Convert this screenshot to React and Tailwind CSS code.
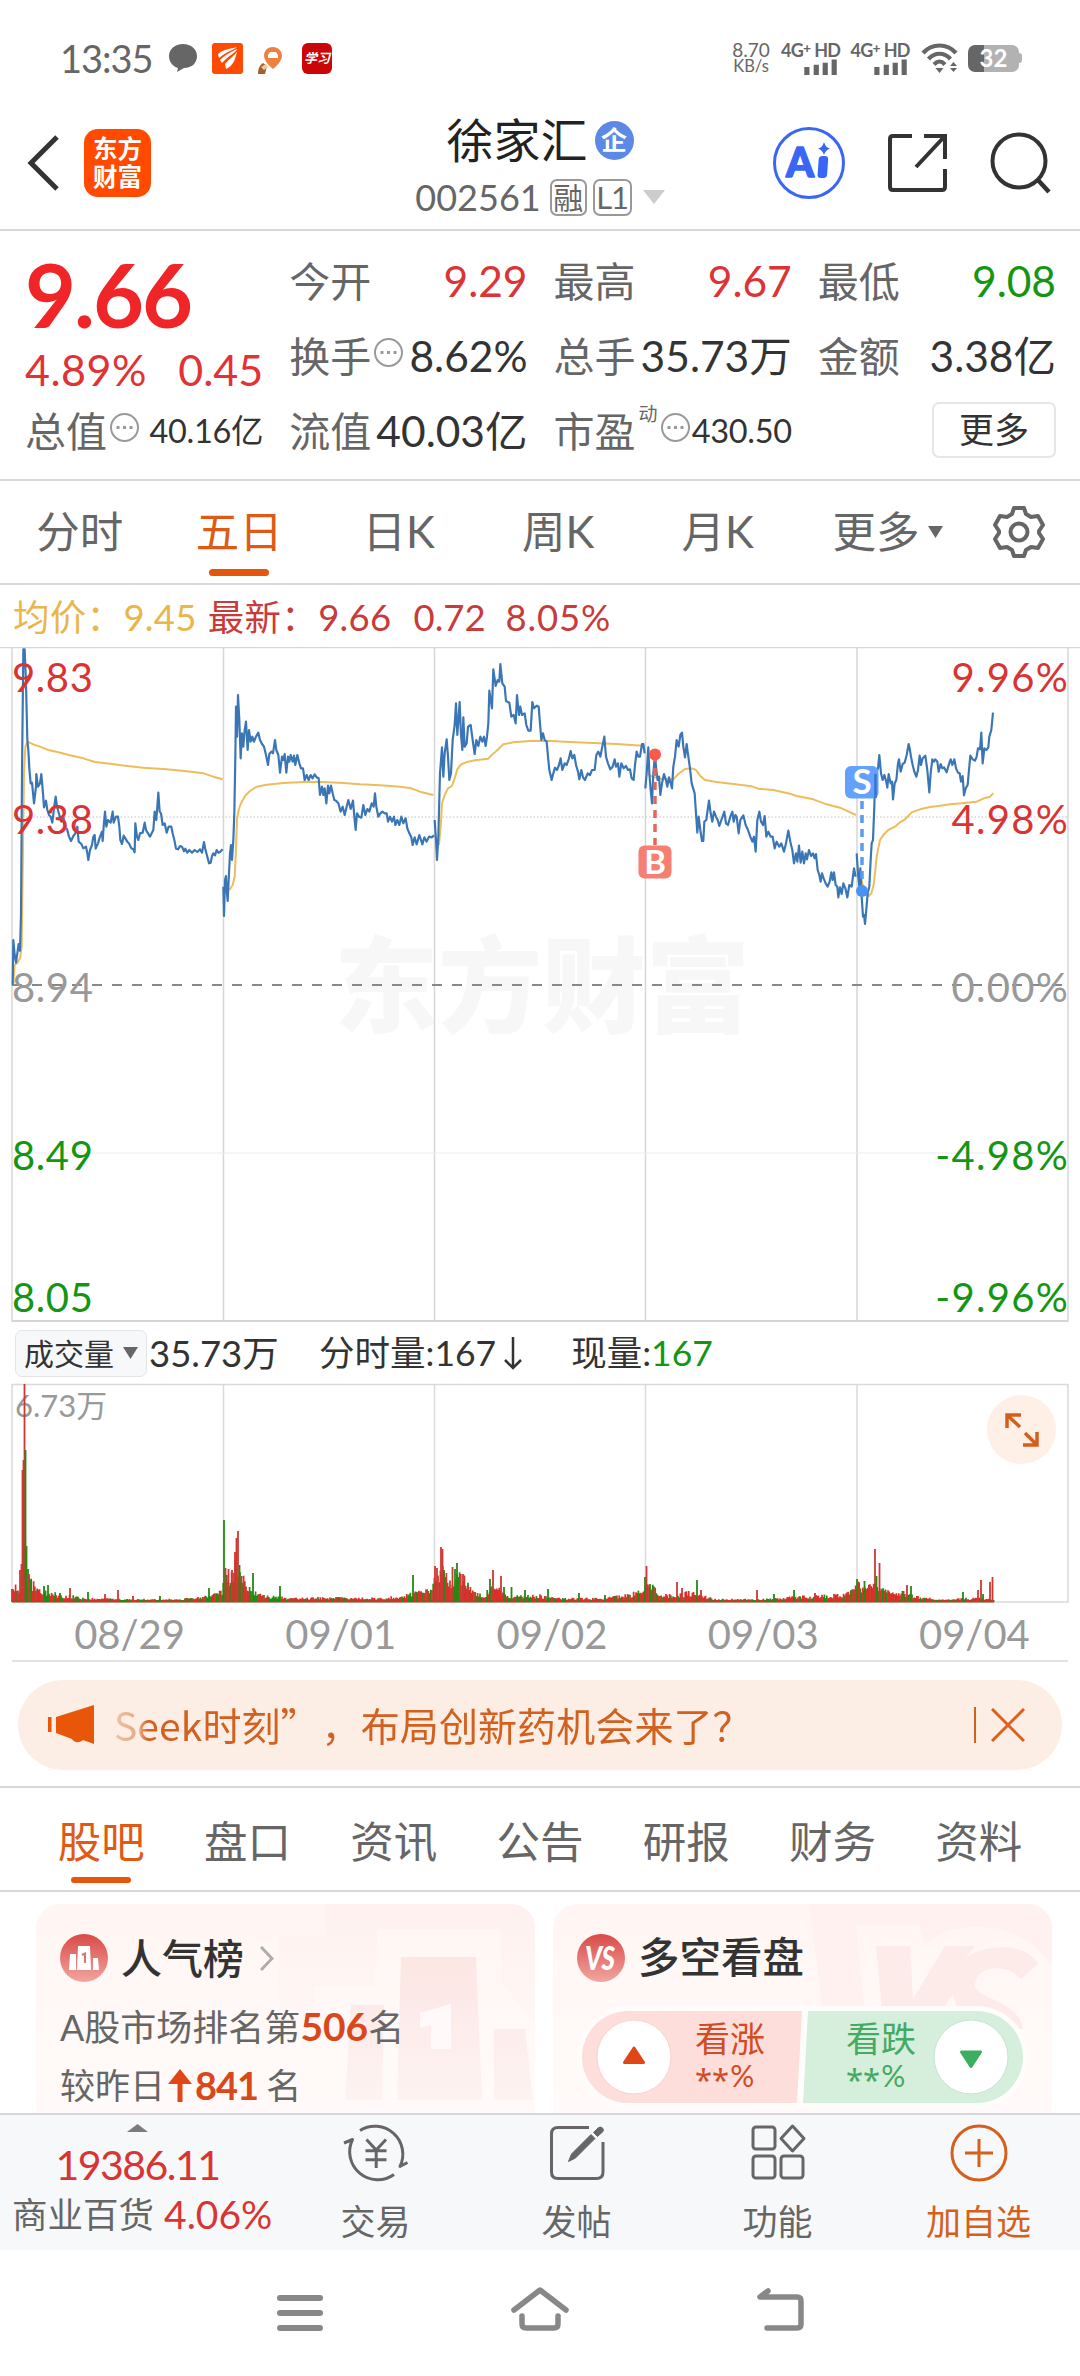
// src/pages/StockDetailPage.jsx
import React from "react";

const TABS = ["分时", "五日", "日K", "周K", "月K"];
const SECTIONS = ["股吧", "盘口", "资讯", "公告", "研报", "财务", "资料"];
const DATES = ["08/29", "09/01", "09/02", "09/03", "09/04"];

// 五日分时走势：坐标为 1/3 像素，x 为每日起点偏移
const DAYS = [
  {
    offset: 0,
    price:
      "38,1035 40,900 44,945 48,968 52,940 56,912 60,932 63,820 66,400 70,28 74,28 78,130 80,215 82,300 85,330 88,385 92,430 96,428 102,490 108,440 109,402 114,440 120,430 124,402 129,460 132,502 138,482 142,510 147,525 152,530 157,548 162,505 167,470 171,500 178,525 184,545 190,530 196,560 202,570 207,590 213,603 220,588 226,580 232,560 236,605 244,612 250,625 258,620 262,640 265,660 270,630 276,615 280,590 284,585 287,626 294,610 300,590 306,575 308,603 311,560 315,515 319,560 324,540 332,548 338,515 341,548 348,530 354,530 358,560 361,600 366,612 371,587 376,595 382,605 388,612 394,625 400,628 404,637 406,550 411,590 415,600 420,580 428,578 434,548 438,570 444,580 450,590 455,580 460,570 464,515 469,540 475,458 479,515 483,520 488,555 494,550 500,578 506,560 514,560 518,580 523,600 528,626 534,628 540,618 546,620 552,634 556,626 562,638 568,630 576,638 584,630 592,636 600,628 606,638 612,606 616,628 622,650 627,670 632,668 636,648 640,640 645,646 650,630 655,638 660,636 668,628",
    avg: "40,1035 44,975 52,968 60,955 65,920 68,700 72,400 76,320 82,305 100,313 120,320 145,330 175,337 210,346 250,355 285,366 330,371 375,377 430,383 500,388 560,394 610,400 640,410 668,418",
  },
  {
    offset: 0,
    price:
      "670,740 672,828 675,720 678,708 680,750 683,783 686,720 690,640 693,615 696,660 700,600 703,520 706,350 708,200 711,290 714,165 718,240 722,355 726,280 730,320 734,270 738,245 743,330 747,270 752,305 757,290 762,305 768,290 775,278 780,300 786,312 792,320 798,345 804,375 808,342 814,335 819,340 825,300 829,330 835,345 840,398 846,350 850,360 854,342 859,398 864,350 868,365 872,345 878,365 882,347 886,375 892,345 898,370 903,385 909,385 914,420 920,405 926,420 932,405 938,415 944,403 950,412 956,415 960,465 966,440 970,465 974,445 979,490 984,437 988,460 993,437 998,460 1003,480 1008,482 1015,490 1022,515 1028,500 1034,525 1040,500 1045,480 1052,507 1059,482 1063,530 1067,570 1071,520 1077,530 1084,533 1090,495 1096,525 1102,507 1108,515 1115,490 1121,500 1125,460 1129,500 1135,530 1141,520 1147,515 1154,520 1160,520 1164,545 1170,530 1176,545 1182,530 1186,555 1192,540 1198,555 1204,530 1210,550 1217,535 1222,565 1228,580 1234,592 1238,615 1244,592 1250,613 1258,585 1263,600 1267,613 1273,592 1280,605 1287,590 1295,592 1302,586",
    avg: "688,750 698,735 704,710 707,650 711,540 716,510 722,492 735,468 750,453 770,440 800,434 850,429 910,426 970,426 1030,429 1080,433 1140,436 1200,440 1230,444 1260,455 1300,465",
  },
  {
    offset: 1260,
    price:
      "44,540 48,600 51,660 55,590 60,400 66,322 70,410 74,340 80,298 84,350 88,420 93,400 98,300 104,255 108,190 112,285 116,230 119,186 123,285 127,330 130,232 134,320 140,310 144,260 152,255 158,300 164,342 169,300 175,318 181,290 187,305 192,290 197,318 201,290 205,250 208,152 212,180 216,205 220,88 227,138 233,120 238,125 241,72 247,130 254,140 258,183 268,188 274,230 281,225 287,250 291,165 297,225 301,200 306,225 314,220 319,255 325,272 332,272 337,186 342,205 350,197 356,200 360,250 364,300 369,280 374,300 380,305 384,350 388,390 395,420 400,400 405,383 411,390 417,375 422,355 427,390 434,370 440,375 447,355 452,333 457,355 463,345 468,375 474,395 478,418 484,390 489,412 495,420 503,400 510,405 516,390 524,390 529,345 535,335 541,350 546,325 553,290 558,350 564,370 571,388 578,380 584,358 588,380 594,370 598,410 604,370 611,385 618,378 624,390 630,388 635,415 641,420 645,375 650,335 655,350 660,350 666,312 670,312 674,340",
    avg: "57,615 62,560 66,490 74,465 84,445 96,438 104,415 112,388 122,374 140,366 165,361 205,356 215,345 230,332 250,313 280,307 330,303 380,302 450,306 520,309 590,312 668,317",
  },
  {
    offset: 1260,
    price:
      "676,445 680,400 685,322 688,400 692,450 696,490 700,400 705,345 709,390 713,420 717,410 721,465 726,430 732,402 738,420 742,440 747,412 752,430 756,445 760,380 765,350 770,300 776,320 781,285 786,278 790,320 795,352 800,312 805,350 810,385 815,430 824,460 828,520 832,578 836,530 841,570 846,603 850,603 853,545 859,540 863,510 867,482 872,520 877,545 882,515 888,530 893,540 898,558 904,540 913,515 918,550 924,555 931,530 937,515 941,545 946,525 950,530 956,580 961,540 970,526 977,555 984,570 991,590 997,605 1002,590 1007,635 1012,540 1018,515 1023,545 1029,555 1034,528 1039,590 1045,575 1052,590 1058,590 1064,625 1070,605 1078,620 1084,610 1092,635 1098,610 1105,572 1111,605 1117,630 1122,670 1128,640 1132,665 1137,617 1142,668 1147,635 1152,670 1157,640 1161,658 1167,630 1173,648 1179,640 1184,655 1188,642 1193,690 1198,705 1202,725 1206,700 1211,715 1217,730 1223,740 1229,725 1234,697 1238,720 1242,697 1247,735 1252,740 1255,772 1260,742 1265,762 1270,730 1276,745 1282,772 1288,735 1295,740 1302,685 1307,710",
    avg: "684,400 692,408 705,412 730,418 760,418 775,402 795,387 815,385 828,390 840,407 855,420 890,426 940,432 995,439 1015,446 1060,450 1110,461 1130,468 1180,478 1220,493 1260,503 1308,525",
  },
  {
    offset: 2340,
    price:
      "230,640 234,700 238,740 241,685 245,770 249,830 252,825 255,852 258,820 263,760 268,740 272,660 275,610 279,600 283,500 285,420 288,400 294,385 298,345 303,400 308,420 313,405 318,422 322,443 326,402 332,430 336,425 339,478 344,430 349,420 354,370 357,358 362,395 368,372 374,368 380,345 386,312 389,325 393,350 398,375 403,395 409,410 414,390 419,347 423,375 428,355 436,347 442,390 448,457 452,400 457,358 462,365 466,358 472,365 476,395 482,372 487,385 492,382 500,397 506,375 512,358 517,375 523,358 528,385 534,398 539,400 543,425 548,408 552,466 557,445 563,435 567,390 571,347 578,358 585,362 590,350 594,325 600,328 604,278 608,370 613,325 619,330 625,322 628,290 634,270 639,218",
    avg: "238,690 243,710 249,740 256,760 266,768 274,760 281,735 286,690 290,650 296,620 300,600 310,585 325,570 345,560 360,547 375,538 395,517 420,508 450,501 480,497 510,493 545,490 590,485 612,475 630,470 640,460",
  },
];

// [x, 高度] 成交量基线包络
const ENVELOPE = [
  [12, 21], [19, 16], [30, 24], [40, 12], [60, 8], [90, 4], [130, 3], [180, 3], [205, 6], [215, 9],
  [222, 12], [224, 30], [230, 28], [236, 40], [242, 28], [250, 15], [260, 8], [290, 4], [330, 5],
  [370, 4], [400, 6], [430, 13], [435, 32], [442, 36], [452, 22], [462, 32], [472, 12], [485, 6],
  [490, 18], [500, 13], [510, 6], [540, 7], [560, 4], [600, 4], [630, 8], [643, 14], [646, 26],
  [652, 18], [660, 9], [675, 7], [690, 11], [700, 8], [715, 3], [760, 3], [800, 6], [845, 8],
  [855, 14], [858, 20], [866, 15], [875, 20], [882, 15], [890, 11], [905, 10], [912, 7], [925, 5],
  [945, 2], [965, 4], [985, 4], [994, 2],
];
const SPIKES = [
  [20, 32, 1], [21.5, 38, 1], [22.5, 132, 1], [23.5, 142, 1], [24.5, 218, 1], [25.5, 152, 0],
  [26.5, 56, 0], [28, 33, 0], [29, 28, 1], [44, 16, 0], [48, 17, 0], [60, 9, 0], [70, 14, 1],
  [88, 10, 0], [105, 8, 1], [118, 12, 1], [133, 6, 1], [160, 6, 0], [209, 14, 0], [224, 82, 0],
  [225.5, 34, 1], [228.5, 33, 1], [232, 32, 1], [235, 50, 1], [236.5, 64, 1], [238, 71, 1],
  [239.5, 37, 0], [241.5, 26, 1], [253, 29, 0], [280, 16, 0], [413, 27, 0], [435, 36, 1],
  [437, 34, 1], [441, 55, 1], [442.5, 53, 1], [444, 32, 0], [446, 25, 1], [452.5, 35, 1],
  [455, 33, 0], [457, 39, 0], [460, 25, 1], [463, 28, 1], [468, 17, 1], [490, 23, 0], [493, 32, 1],
  [501, 26, 1], [504, 15, 0], [511.5, 15, 0], [525, 12, 0], [548, 13, 0], [579, 9, 0], [605, 7, 0],
  [645, 25, 0], [646.5, 36, 1], [650, 18, 0], [677, 20, 1], [682, 14, 1], [697, 22, 0],
  [701, 12, 1], [757, 12, 1], [774, 8, 0], [794, 12, 0], [815, 9, 1], [857, 23, 0], [864.5, 21, 0],
  [875, 53, 1], [876.5, 26, 0], [879.5, 39, 1], [907, 17, 1], [911, 16, 0], [963, 10, 0],
  [978, 12, 1], [981, 22, 1], [983, 8, 0], [990, 20, 1], [992.5, 25, 1],
];

function envelopeAt(x) {
  for (let i = 1; i < ENVELOPE.length; i++) {
    const [x0, h0] = ENVELOPE[i - 1];
    const [x1, h1] = ENVELOPE[i];
    if (x <= x1) return h0 + ((h1 - h0) * (x - x0)) / (x1 - x0);
  }
  return 2;
}

function buildVolume() {
  let seed = 20250904;
  const rand = () => {
    seed = (seed * 1103515245 + 12345) % 2147483648;
    return seed / 2147483648;
  };
  let red = "";
  let green = "";
  for (let x = 12; x < 994; x += 1.2) {
    const h = Math.max(2, envelopeAt(x) * (0.5 + 0.6 * rand()));
    const seg = `M${x.toFixed(1)} 218v-${h.toFixed(1)}`;
    if (rand() > 0.4) red += seg;
    else green += seg;
  }
  return { red, green };
}
const VOLUME = buildVolume();

export default function App() {
  return (
    <div
      lang="zh-CN"
      className="w-[1080px] h-[2376px] bg-white text-[#666] flex flex-col overflow-hidden leading-none font-['Lato','Noto_Sans_CJK_SC',sans-serif] whitespace-nowrap"
    >
      <StatusBar />
      <Header />
      <Quote />
      <PeriodTabs />
      <PriceChart />
      <VolumeChart />
      <Banner />
      <SectionTabs />
      <Cards />
      <BottomBar />
      <SystemNav />
    </div>
  );
}

function StatusBar() {
  return (
    <div className="h-[88px] shrink-0 flex items-center pt-[28px] pl-[60px] pr-[58px] justify-between">
      <div className="flex items-center">
        <span className="text-[38px] w-[108px] tracking-[-1px]">13:35</span>
        <svg className="w-[30px] h-[30px]" viewBox="0 0 30 30">
          <path d="M15 1C7 1 1 6 1 13s5 11 9 12l-1 4 7-4c8 0 13-5 13-12S23 1 15 1Z" fill="#666" />
        </svg>
        <svg className="w-[31px] h-[31px] ml-[14px]" viewBox="0 0 31 31">
          <rect width="31" height="31" rx="3" fill="#ff4a05" />
          <path d="M6 11C12 6 18 6 25 4c-3 3-10 4-18 11ZM8 17C14 11 19 9 25 6c-1 4-8 6-15 14ZM14 26c8-4 9-10 11-17-3 4-8 7-12 12Z" fill="#fff" />
        </svg>
        <svg className="w-[30px] h-[31px] ml-[14px]" viewBox="0 0 30 31">
          <path d="M16 4c-6 0-9 4-9 9 0 6 9 13 9 13s9-7 9-13c0-5-4-9-9-9Z" fill="#f08040" />
          <path d="M11 12l2-3h6l2 3v3H11Z" fill="#fff" />
          <path d="M1 31c0-6 2-9 5-11l4 3-2 8Z" fill="#a4602c" />
          <path d="M4 24l5-3 2 3-4 3Z" fill="#f7c79c" />
        </svg>
        <div className="w-[30px] h-[31px] ml-[15px] rounded-[6px] bg-[#cc0608] text-white text-[13px] font-bold italic flex items-center justify-center">
          学习
        </div>
      </div>
      <div className="flex items-center">
        <div className="w-[44px] text-[19px] leading-[17px] text-center mr-[8px]">
          <div>8.70</div>
          <div className="text-[16.500px]">KB/s</div>
        </div>
        <Signal />
        <Signal />
        <svg className="w-[40px] h-[32px]" viewBox="0 0 40 32">
          <g fill="none" stroke="#666" strokeWidth="4.2">
            <path d="M3 11C12 1 27 1 36 11" />
            <path d="M8.500 17C15 10 24 10 30.500 17" />
            <path d="M14 22.500c4-4 7-4 11 0" />
          </g>
          <path d="M15.500 26h8L19.500 31ZM30 24l3.500-4 3.500 4ZM30 26h7l-3.500 4Z" fill="#666" />
        </svg>
        <div className="ml-[8px] w-[51px] h-[27px] rounded-[7px] bg-gradient-to-r from-[#666] from-32% to-[#b2b2b2] to-32% text-white font-bold text-[24px] flex items-center justify-center">
          32
        </div>
        <div className="w-[3px] h-[10px] bg-[#b2b2b2] rounded-r" />
      </div>
    </div>
  );
}

function Signal() {
  return (
    <div className="w-[69.500px] h-[34px] flex flex-col justify-between">
      <div className="text-[18px] font-bold tracking-[-0.7px]">
        4G<span className="text-[14px] align-[4px]">+</span> HD
      </div>
      <svg className="w-[36px] h-[17px] ml-[22px]" viewBox="0 0 36 17">
        <path d="M3 8.500V17M13 6V17M22.500 4V17M32 0.500V17" stroke="#666" strokeWidth="5.500" />
      </svg>
    </div>
  );
}

function Header() {
  return (
    <div className="h-[143px] shrink-0 border-b-2 border-[#d9d9d9] flex items-center">
      <div className="w-[390px] flex items-center pl-[27px] pb-[1px]">
        <svg className="w-[34px] h-[56px] mt-[9px]" viewBox="0 0 34 56" fill="none">
          <path d="M30 2 4 28l26 26" stroke="#333" strokeWidth="5" />
        </svg>
        <div className="ml-[23px] mt-[9px] w-[67px] h-[68px] rounded-[14px] bg-[#ff4a00] text-white text-[24.500px] leading-[28px] font-bold flex flex-col items-center justify-center">
          <span>东方</span>
          <span>财富</span>
        </div>
      </div>
      <div className="w-[300px] flex flex-col items-center pt-[15px]">
        <div className="flex items-center gap-[7px] text-[47px] text-[#222]">
          徐家汇
          <span className="size-[39px] rounded-full bg-[#5d89e6] text-white text-[26px] font-bold flex items-center justify-center">
            企
          </span>
        </div>
        <div className="flex items-center mt-[15px]">
          <span className="text-[36px] mr-[9px]">002561</span>
          <span className="w-[37px] h-[37px] rounded-[7px] border-2 border-[#999] text-[30px] flex items-center justify-center">融</span>
          <span className="ml-[6px] w-[39px] h-[37px] rounded-[7px] border-2 border-[#999] text-[31px] flex items-center justify-center tracking-[-1px]">L1</span>
          <svg className="w-[22px] h-[14px] ml-[11px]" viewBox="0 0 22 14">
            <path d="M0 0h22L11 14Z" fill="#ccc" />
          </svg>
        </div>
      </div>
      <div className="flex-1 flex items-center pl-[82px] pt-[8px]">
        <svg className="size-[74px]" viewBox="0 0 74 74">
          <circle cx="37" cy="37" r="34.500" fill="#fff" stroke="#3a66f6" strokeWidth="3" />
          <text x="14" y="51" fontSize="41" fontWeight="900" fill="#3a66f6" stroke="#3a66f6" strokeWidth="1.500" strokeLinejoin="round" textLength="28" lengthAdjust="spacingAndGlyphs">A</text>
          <rect x="46" y="30" width="9.500" height="22" rx="3.500" fill="#3a66f6" transform="skewX(-4) translate(3 0)" />
          <path d="M52 16q1.500 5.500 6 6.500-4.500 1.500-6 6.500-1.500-5-6-6.500 4.500-1 6-6.500Z" fill="#3a66f6" />
        </svg>
        <svg className="w-[60px] h-[60px] ml-[41px]" viewBox="0 0 60 60" fill="none" stroke="#333" strokeWidth="4">
          <path d="M25 3H6Q3 3 3 6V54q0 3 3 3H55q3 0 3-3V36" />
          <path d="M37 3H58V26M57 4 29 34" />
        </svg>
        <svg className="w-[62px] h-[62px] ml-[43px]" viewBox="0 0 62 62" fill="none" stroke="#333" strokeWidth="4">
          <circle cx="29" cy="29" r="26.500" />
          <path d="M48 48 59 60" strokeWidth="4.500" />
        </svg>
      </div>
    </div>
  );
}

function Dots() {
  return (
    <svg className="size-[31px] mt-[-8px] ml-[2px] shrink-0" viewBox="0 0 31 31">
      <circle cx="15.500" cy="15.500" r="13.500" fill="none" stroke="#999" strokeWidth="2" />
      <path d="M7.500 15.500h3M14 15.500h3M20.500 15.500h3" stroke="#999" strokeWidth="3" />
    </svg>
  );
}

function Cell({ label, value, dots, sup, color = "text-[#333]", small }) {
  return (
    <div className="flex items-center h-[75px]">
      <span className="text-[41px]">{label}</span>
      {sup && <span className="text-[19px] mb-[37px] ml-[3px]">{sup}</span>}
      {dots && <Dots />}
      <span className={`ml-auto ${small ? "text-[32.500px] tracking-[-0.3px]" : "text-[42.500px]"} ${color}`}>
        {value}
      </span>
    </div>
  );
}

function Quote() {
  return (
    <div className="h-[250px] shrink-0 border-b-2 border-[#d9d9d9] pl-[25px] pr-[24px] pt-[13px] grid grid-cols-4 grid-rows-[75px_75px_75px] gap-x-[26px]">
      <div className="row-span-2 text-[#e13236]">
        <div className="text-[88px] font-bold text-[#ef2528] tracking-[-2px] h-[88px] mt-[6px]">9.66</div>
        <div className="flex justify-between text-[43px] mt-[10px]">
          <span className="tracking-[0.5px]">4.89%</span>
          <span>0.45</span>
        </div>
      </div>
      <Cell label="今开" value="9.29" color="text-[#dc3436]" />
      <Cell label="最高" value="9.67" color="text-[#dc3436]" />
      <Cell label="最低" value="9.08" color="text-[#149614]" />
      <Cell label="换手" value="8.62%" dots />
      <Cell label="总手" value="35.73万" />
      <Cell label="金额" value="3.38亿" />
      <Cell label="总值" value="40.16亿" dots small />
      <Cell label="流值" value="40.03亿" />
      <Cell label="市盈" value="430.50" sup="动" dots small />
      <div className="self-center justify-self-end w-[124px] h-[56px] mb-[4px] rounded-[7px] border-2 border-[#e6e6e6] text-[#333] text-[35px] flex items-center justify-center">
        更多
      </div>
    </div>
  );
}

function PeriodTabs() {
  return (
    <div className="h-[104px] shrink-0 border-b-2 border-[#d9d9d9] flex items-center text-[43.500px]">
      {TABS.map((t) => (
        <div key={t} className={`w-[159.500px] h-full relative flex items-center justify-center ${t === "五日" ? "text-[#df5a14]" : ""}`}>
          {t}
          {t === "五日" && <span className="absolute bottom-[7px] w-[60px] h-[7px] rounded-full bg-[#e4560c]" />}
        </div>
      ))}
      <div className="w-[180px] flex items-center justify-center gap-[8px]">
        更多
        <svg className="w-[15px] h-[12px]" viewBox="0 0 15 12">
          <path d="M0 0h15L7.500 12Z" fill="#666" />
        </svg>
      </div>
      <svg className="size-[56px] ml-[13px]" viewBox="0 0 56 56" fill="none" stroke="#666" strokeWidth="4" strokeLinejoin="round">
        <path d="M23 4h10l2 6 5 3 7-1 5 9-4 6v2l4 6-5 9-7-1-5 3-2 6H23l-2-6-5-3-7 1-5-9 4-6v-2l-4-6 5-9 7 1 5-3Z" />
        <circle cx="28" cy="28" r="8.500" />
      </svg>
    </div>
  );
}

function PriceChart() {
  return (
    <div className="shrink-0">
      <div className="h-[62px] flex items-center text-[36.500px] pl-[13px] text-[#c93a3a] pt-[2px]">
        <span className="text-[#e9b64c] mr-[11px] tracking-[0.3px]">均价：9.45</span>
        <span className="tracking-[0.3px]">最新：9.66</span>
        <span className="ml-[22px]">0.72</span>
        <span className="ml-[20px] tracking-[0.8px]">8.05%</span>
      </div>
      <svg className="w-[1080px] h-[675px] block" viewBox="0 7 1080 675">
        <text x="334" y="385" fontSize="104" fontWeight="900" fill="#f7f7f7">东方财富</text>
        <g stroke="#d6d6d6" fill="none">
          <path d="M0 7.500H1080" strokeWidth="1.500" />
          <path d="M12 8V682M223.500 8V682M434.500 8V682M645.500 8V682M857 8V682M1068 8V682" strokeWidth="1.500" />
          <path d="M12 681H1068" strokeWidth="2" />
          <path d="M12 513H1068" stroke="#ececec" />
          <path d="M12 177H1068" strokeWidth="1.500" strokeDasharray="1.500 2" />
          <path d="M12 345H1068" stroke="#888" strokeWidth="2" strokeDasharray="10 10" />
        </g>
        {DAYS.map((d, i) => (
          <g key={i} transform={`scale(0.33333) translate(${d.offset} 0)`} fill="none" strokeLinejoin="round">
            <polyline points={d.avg} stroke="#edbd5c" strokeWidth="6" />
            <polyline points={d.price} stroke="#3a75b5" strokeWidth="6.500" />
          </g>
        ))}
        <path d="M655 114V205" stroke="#e2685e" strokeWidth="3.500" strokeDasharray="8 6" />
        <circle cx="655" cy="114.500" r="6" fill="#fa5a4b" />
        <rect x="638.500" y="205.500" width="33" height="33" rx="6" fill="#f77f71" />
        <text x="655" y="234" fontSize="33" fontWeight="bold" fill="#fff" textAnchor="middle">B</text>
        <path d="M862 161V250" stroke="#5a9bf0" strokeWidth="3.500" strokeDasharray="8 6" />
        <circle cx="862" cy="251" r="6" fill="#4a92f5" />
        <rect x="845" y="126" width="33.500" height="32.500" rx="6" fill="#64a1fb" />
        <path d="M875.500 134V158" stroke="#3274d8" strokeWidth="2.500" />
        <text x="862" y="154" fontSize="35" fontWeight="bold" fill="#fff" textAnchor="middle">S</text>
        <g fontSize="40" letterSpacing="0.600">
          <g fill="#d83434">
            <text x="12" y="52">9.83</text>
            <text x="12" y="194">9.38</text>
          </g>
          <text x="12" y="362" fill="#999">8.94</text>
          <g fill="#149614">
            <text x="12" y="530">8.49</text>
            <text x="12" y="672">8.05</text>
          </g>
          <g textAnchor="end" letterSpacing="1.300">
            <g fill="#d83434">
              <text x="1069" y="52">9.96%</text>
              <text x="1069" y="194">4.98%</text>
            </g>
            <text x="1069" y="362" fill="#999">0.00%</text>
            <g fill="#149614">
              <text x="1069" y="530">-4.98%</text>
              <text x="1069" y="672">-9.96%</text>
            </g>
          </g>
        </g>
      </svg>
    </div>
  );
}

function VolumeChart() {
  return (
    <div className="shrink-0 mx-[12px] h-[340px] border-b-2 border-[#e2e2e2]">
      <div className="h-[62px] flex items-center text-[35.500px] text-[#333] pl-[3px]">
        <span className="w-[132px] h-[47px] rounded-[7px] border border-[#e4e5e8] bg-[#f7f8fa] text-[30px] flex items-center justify-center gap-[9px]">
          成交量
          <svg className="w-[15px] h-[12px]" viewBox="0 0 15 12">
            <path d="M0 0h15L7.500 12Z" fill="#666" />
          </svg>
        </span>
        <span className="w-[170px] ml-[2px] text-[36.500px]">35.73万</span>
        <span>分时量:167</span>
        <svg className="w-[18px] h-[33px] ml-[8px]" viewBox="0 0 18 33" fill="none" stroke="#333" strokeWidth="2.500">
          <path d="M9 0V31M1 23l8 8 8-8" />
        </svg>
        <span className="ml-[49px]">
          现量:<span className="text-[#149614]">167</span>
        </span>
      </div>
      <div className="relative h-[218px]">
        <svg className="w-[1056px] h-[219px] block overflow-visible" viewBox="12 0 1056 219" fill="none">
          <path d="M12 0.500H1068M12 0V218H1068V0M223.500 0V218M434.500 0V218M645.500 0V218M857 0V218" stroke="#dadada" strokeWidth="1.500" />
          <text x="15" y="33" fontSize="31" fill="#999">6.73万</text>
          <path d="M12 217.500H994" stroke="#8c4a1c" strokeWidth="2" />
          <path d={VOLUME.green} stroke="#238a12" strokeWidth="1.700" />
          <path d={VOLUME.red} stroke="#d9302a" strokeWidth="1.700" />
          {SPIKES.map(([x, h, up]) => (
            <path key={x} d={`M${x} 218v-${h}`} stroke={up ? "#cf3733" : "#238a12"} strokeWidth="1.800" />
          ))}
        </svg>
        <div className="absolute right-[12px] top-[11px] size-[69px] rounded-full bg-[#feefe7] flex items-center justify-center">
          <svg className="size-[36px]" viewBox="0 0 36 36" fill="none" stroke="#d45f1c" strokeWidth="3.500">
            <path d="M3 16V3H17M3 3 16 15" />
            <path d="M33 20V33H19M33 33 21 21" />
          </svg>
        </div>
      </div>
      <div className="grid grid-cols-5 text-center text-[40px] text-[#999] pt-[12px] pl-[12px] -mr-[12px]">
        {DATES.map((d) => (
          <span key={d}>{d}</span>
        ))}
      </div>
    </div>
  );
}

function Banner() {
  return (
    <div className="shrink-0 h-[126px] border-b-2 border-[#d9d9d9] px-[18px] pt-[18px]">
      <div className="h-[90px] rounded-[45px] bg-[#fceee5] flex items-center pl-[30px] pr-[37px] text-[#d2601f]">
        <svg className="w-[46px] h-[40px]" viewBox="0 0 46 40">
          <path d="M0 12h3.500V27H0ZM8 12 46 0V39L35 35c-3 3-9 3-11-1L8 28Z" fill="#e8560a" />
        </svg>
        <span className="ml-[20px] pb-[3px] text-[39px] leading-[46px] tracking-[0.1px] font-['Noto_Sans_CJK_SC',sans-serif] [mask-image:linear-gradient(to_right,rgba(0,0,0,0.3),rgba(0,0,0,0.500)_26px,#000_34px)]">
          Seek时刻<span className="inline-block w-[41px]">”</span>，布局创新药机会来了？
        </span>
        <span className="ml-auto w-[2px] h-[36px] bg-[#d2601f]" />
        <svg className="size-[34px] ml-[15px]" viewBox="0 0 34 34" fill="none" stroke="#dd5f1c" strokeWidth="3">
          <path d="M1 1 33 33M33 1 1 33" />
        </svg>
      </div>
    </div>
  );
}

function SectionTabs() {
  return (
    <div className="shrink-0 h-[104px] border-b-2 border-[#d9d9d9] grid grid-cols-7 px-7 text-[43.500px]">
      {SECTIONS.map((s, i) => (
        <div key={s} className={`relative flex items-center justify-center mt-[5px] ${i === 0 ? "text-[#df5a14]" : ""}`}>
          {s}
          {i === 0 && <span className="absolute bottom-[7px] w-[60px] h-[6px] rounded-full bg-[#e4560c]" />}
        </div>
      ))}
    </div>
  );
}

function Cards() {
  return (
    <div className="shrink-0 h-[221px] overflow-hidden flex gap-[18px] pl-[36px] pr-[28px] pt-[12px]">
      <div className="relative w-[499px] h-[260px] rounded-[24px] bg-gradient-to-b from-[#fff6f3] to-[#fffcfb] overflow-hidden pl-[24px] pt-[30px]">
        <svg className="absolute inset-0 w-[499px] h-[210px]" viewBox="0 0 499 210">
          <defs>
            <linearGradient id="fade" x1="0" y1="0" x2="0" y2="1">
              <stop offset="0" stopColor="#fce6e4" />
              <stop offset="1" stopColor="#fdf3f1" />
            </linearGradient>
            <linearGradient id="halo" x1="0" y1="0" x2="0" y2="1">
              <stop offset="0" stopColor="#fef1ef" />
              <stop offset="0.800" stopColor="#fff9f7" />
            </linearGradient>
          </defs>
          <path d="M290 0H499V120L466 80 464 25H342L338 82H278V190H243V32H289Z" fill="url(#halo)" />
          <path d="M365 53H440L446 196H361ZM315 101H348L346 196H309ZM458 125H489L497 196H458Z" fill="url(#fade)" />
          <path d="M384 109 415 100V145H395V121L384 124Z" fill="#fffaf9" />
        </svg>
        <div className="relative flex items-center text-[41px] font-medium text-[#333]">
          <svg className="size-[48px] mr-[13px]" viewBox="0 0 48 48">
            <defs>
              <linearGradient id="badge" x1="0" y1="0" x2="0" y2="1">
                <stop offset="0" stopColor="#d94a47" />
                <stop offset="1" stopColor="#f2a5a0" />
              </linearGradient>
            </defs>
            <circle cx="24" cy="24" r="24" fill="url(#badge)" />
            <path d="M10 20h6v16H9ZM18 12h12l1 24H17ZM33 24h5l1 12h-6Z" fill="#fff" />
            <path d="M22 21l3-1.500V29" stroke="#e0716d" strokeWidth="2" fill="none" />
          </svg>
          人气榜
          <svg className="w-[14px] h-[25px] ml-[16px]" viewBox="0 0 14 25" fill="none" stroke="#b0acab" strokeWidth="3">
            <path d="M1 1 12 12.500 1 24" />
          </svg>
        </div>
        <div className="relative text-[36px] mt-[25px]">
          A股市场排名第<b className="text-[#d9481c] text-[39px]">506</b>名
        </div>
        <div className="relative text-[35px] mt-[20px] flex items-center">
          较昨日
          <svg className="w-[24px] h-[33px] ml-[3px] mr-[3px]" viewBox="0 0 24 33">
            <path d="M12 0 24 15H14.500V33H9.500V15H0Z" fill="#e04616" />
          </svg>
          <b className="text-[#d9481c] text-[38px] tracking-[-1px]">841</b>
          <span className="ml-[8px]">名</span>
        </div>
      </div>
      <div className="relative w-[499px] h-[260px] rounded-[24px] bg-gradient-to-b from-[#fff6f3] to-[#fffcfb] overflow-hidden pl-[24px] pt-[30px]">
        <svg className="absolute inset-0 w-[499px] h-[210px]" viewBox="0 0 499 210">
          <path d="M256 0H499V60C470 25 440 18 395 26L372 40 366 21H303L312 107H270Z" fill="#fef1ef" />
          <path d="M323 42H357L360 95 392 42H422L412 55C425 42 470 35 485 60L468 75C455 60 425 60 422 80 420 95 465 95 470 125H410L400 90 388 107H329Z" fill="#fcebe9" />
        </svg>
        <div className="relative flex items-center text-[41.500px] font-medium text-[#333]">
          <svg className="size-[48px] mr-[13px]" viewBox="0 0 48 48">
            <circle cx="24" cy="24" r="24" fill="url(#badge)" />
            <text x="23" y="36" fontSize="32" fontWeight="900" fontStyle="italic" fill="#fff" textAnchor="middle" textLength="30" lengthAdjust="spacingAndGlyphs">VS</text>
          </svg>
          多空看盘
        </div>
        <div className="relative mt-[24px] w-[451px] h-[102px] rounded-full bg-[#fffdfc] p-[5px]">
          <svg className="absolute left-[5px] top-[5px] w-[441px] h-[92px]" viewBox="0 0 441 92">
            <path d="M46 0H220L215 92H46A46 46 0 0 1 46 0Z" fill="#fddeda" />
            <path d="M226 0H395A46 46 0 0 1 395 92H221Z" fill="#d6eedc" />
            <circle cx="52" cy="46" r="37" fill="#fff" stroke="#f8d3cf" />
            <circle cx="389" cy="46" r="37" fill="#fff" stroke="#c8e3cf" />
            <path d="M52 37 61.500 51.500H42.500Z" fill="#e04616" stroke="#e04616" strokeWidth="3" strokeLinejoin="round" />
            <path d="M389 55.500 398.500 41H379.500Z" fill="#3cae60" stroke="#3cae60" strokeWidth="3" strokeLinejoin="round" />
          </svg>
          <div className="relative flex text-[35px] pt-[10px]">
            <div className="ml-[113px] w-[151px] text-[#cf4c24]">
              <div>看涨</div>
              <Masked />
            </div>
            <div className="text-[#44a963]">
              <div>看跌</div>
              <Masked />
            </div>
          </div>
        </div>
      </div>
    </div>
  );
}

// 未登录时比例以 ** 代替
function Masked() {
  return (
    <div className="text-[30px] mt-[4px] flex items-center font-['Noto_Sans',sans-serif]">
      <span className="text-[31px] h-[22px] mr-[1px]">**</span>
      <span className="font-['Lato',sans-serif]">%</span>
    </div>
  );
}

function BottomBar() {
  return (
    <div className="shrink-0 h-[137px] bg-[#f7f8fa] border-t-2 border-[#d5d7dc] flex">
      <div className="w-[275px] flex flex-col items-center pt-[9px]">
        <svg className="w-[21px] h-[8px]" viewBox="0 0 21 8">
          <path d="M0 8 10.500 0 21 8Z" fill="#7c7c80" />
        </svg>
        <span className="text-[41px] text-[#d93434] tracking-[-1.500px] mt-[12px]">19386.11</span>
        <div className="text-[35.500px] mt-[10px] pl-[12px] w-full flex items-center">
          商业百货
          <span className="ml-[10px] text-[39px] text-[#d93434]">4.06%</span>
        </div>
      </div>
      <Action label="交易">
        <path d="M16 9.500A28 28 0 0 1 56 45.500L63.500 41.500M50 53.500A28 28 0 0 1 8.500 18.500L0 22" strokeLinejoin="round" />
        <path d="M22.500 18.500 32.200 29 42 18.500M32.200 29V47M21.500 29.700H42.500M21.500 38.700H42.500" />
      </Action>
      <Action label="发帖">
        <path d="M44 6.500H13Q6.500 6.500 6.500 13V51Q6.500 57.500 13 57.500H51.500Q58 57.500 58 51V21" />
        <path d="M23.500 40.500 26.500 33 46 13.500 50 17.500 30.500 37ZM48.500 11.500 53.500 6.500q2.500-1 4 .5t.5 3.500L52.500 15.500Z" fill="currentColor" strokeWidth="1" />
      </Action>
      <Action label="功能">
        <rect x="7" y="6" width="22" height="22" rx="3" />
        <rect x="7" y="35" width="22" height="22" rx="3" />
        <rect x="35" y="35" width="22" height="22" rx="3" />
        <path d="M46.500 5 58 17.500 46.500 30 35 17.500Z" strokeLinejoin="round" />
      </Action>
      <Action label="加自选" active>
        <circle cx="32" cy="32" r="27" />
        <path d="M18 32H46M32 18V46" />
      </Action>
    </div>
  );
}

function Action({ label, active, children }) {
  return (
    <div className={`w-[201px] flex flex-col items-center pt-[6px] text-[35px] ${active ? "text-[#d4601e]" : ""}`}>
      <svg className="size-[64px] overflow-visible" viewBox="0 0 64 64" fill="none" stroke="currentColor" strokeWidth="3">
        {children}
      </svg>
      <span className="mt-[19px]">{label}</span>
    </div>
  );
}

function SystemNav() {
  return (
    <div className="flex-1 flex justify-between px-[276px] pt-[36px]">
      <svg className="w-[48px] h-[46px]" viewBox="0 0 48 46" stroke="#888" strokeWidth="6" strokeLinecap="round">
        <path d="M4 12H44M4 27H44M4 42H44" />
      </svg>
      <svg className="w-[60px] h-[46px]" viewBox="0 0 60 46" fill="none" stroke="#888" strokeWidth="5.500" strokeLinecap="round" strokeLinejoin="round">
        <path d="M4 24 30 4 56 24" />
        <path d="M12 30V38Q12 42 16 42H44Q48 42 48 38V30" />
      </svg>
      <svg className="w-[48px] h-[46px]" viewBox="0 0 48 46" fill="none" stroke="#888" strokeWidth="5.500" strokeLinecap="round" strokeLinejoin="round">
        <path d="M12 5 4 11H41Q45 11 45 15V38Q45 42 41 42H11" />
      </svg>
    </div>
  );
}
